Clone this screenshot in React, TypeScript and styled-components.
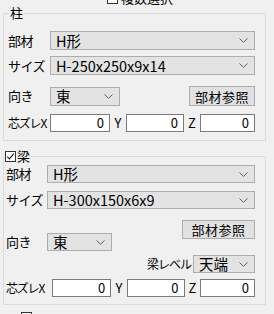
import { FC } from 'react';
import styled, { createGlobalStyle } from 'styled-components';

const GlobalStyle = createGlobalStyle`
  html, body {
    margin: 0;
    padding: 0;
    background: #f0f0f0;
  }
  body {
    font-family: "Noto Sans CJK JP", "Liberation Sans", sans-serif;
    font-size: 13px;
    color: #000;
  }
`;

const Panel = styled.div`
  width: 274px;
  height: 314px;
  overflow: hidden;
  box-sizing: border-box;
  padding: 0 8px 0 3px;
  background: #f0f0f0;
  display: flex;
  flex-direction: column;
`;

const CutRow = styled.div<{ $height: number; $shift: number; $indent: number }>`
  height: ${({ $height }) => $height}px;
  overflow: hidden;
  flex: none;
  > div {
    margin-top: ${({ $shift }) => $shift}px;
    margin-left: ${({ $indent }) => $indent}px;
    display: flex;
    align-items: center;
    gap: 3px;
    line-height: 14px;
  }
`;

const Group = styled.fieldset<{ $top: number; $pt: number; $pb: number; $pl: number }>`
  margin: ${({ $top }) => $top}px 0 0 0;
  padding: ${({ $pt }) => $pt}px 10px ${({ $pb }) => $pb}px ${({ $pl }) => $pl}px;
  border: 1px solid #dcdcdc;
  border-radius: 0;
  min-width: 0;
  flex: none;
  box-sizing: border-box;
`;

const Legend = styled.legend<{ $ml: number }>`
  padding: 0 1px;
  margin-left: ${({ $ml }) => $ml}px;
  line-height: 14px;
  font-size: 13px;
  display: flex;
  align-items: center;
  gap: 1px;
`;

const Box = styled.span`
  width: 11px;
  height: 11px;
  box-sizing: border-box;
  border: 1px solid #333;
  background: #fff;
  display: inline-flex;
  align-items: center;
  justify-content: center;
`;

const Row = styled.div<{ $mt: number; $label: number }>`
  display: grid;
  grid-template-columns: ${({ $label }) => $label}px 1fr;
  align-items: center;
  margin-top: ${({ $mt }) => $mt}px;
`;

const Label = styled.span<{ $small?: boolean }>`
  white-space: nowrap;
  line-height: 14px;
  font-size: ${({ $small }) => ($small ? '12px' : '13px')};
  letter-spacing: ${({ $small }) => ($small ? '-1px' : '-0.5px')};
`;

const Combo = styled.div<{ $w?: number; $h: number }>`
  width: ${({ $w }) => ($w ? `${$w}px` : 'auto')};
  height: ${({ $h }) => $h}px;
  box-sizing: border-box;
  border: 1px solid #adadad;
  background: #e3e3e3;
  display: flex;
  align-items: center;
  justify-content: space-between;
  padding: 0 6px 0 5px;
  font-size: 14.5px;
  line-height: 14px;
  svg {
    flex: none;
  }
`;

const Button = styled.div<{ $w: number; $h: number }>`
  width: ${({ $w }) => $w}px;
  height: ${({ $h }) => $h}px;
  box-sizing: border-box;
  border: 1px solid #adadad;
  background: #e1e1e1;
  display: flex;
  align-items: center;
  justify-content: center;
  font-size: 13px;
  letter-spacing: 0.5px;
`;

const OffsetRow = styled.div<{ $mt: number }>`
  display: flex;
  align-items: center;
  margin-top: ${({ $mt }) => $mt}px;
`;

const OffsetLabel = styled.span<{ $w: number }>`
  width: ${({ $w }) => $w}px;
  white-space: nowrap;
  font-size: 12px;
  letter-spacing: -1.2px;
`;

const Axis = styled.span<{ $w: number }>`
  width: ${({ $w }) => $w}px;
  text-align: center;
  font-size: 13px;
`;

const NumField = styled.div<{ $w: number }>`
  width: ${({ $w }) => $w}px;
  height: 18px;
  box-sizing: border-box;
  border: 1px solid #7a7a7a;
  background: #fff;
  display: flex;
  align-items: center;
  justify-content: flex-end;
  padding-right: 5px;
  font-size: 13px;
`;

const DirArea = styled.div`
  display: grid;
  grid-template-columns: auto 1fr;
  margin-top: 11px;
`;

const DirLeft = styled.div`
  display: grid;
  grid-template-columns: 41px auto;
  align-items: center;
  align-self: start;
  margin-top: 13px;
`;

const DirRight = styled.div`
  display: flex;
  flex-direction: column;
  align-items: flex-end;
  gap: 16px;
`;

const LevelRow = styled.div`
  display: flex;
  align-items: center;
  gap: 2px;
`;

const ButtonRow = styled.div<{ $mt: number }>`
  display: flex;
  justify-content: space-between;
  align-items: center;
  margin-top: ${({ $mt }) => $mt}px;
`;

const InlineCombo = styled.div<{ $label: number }>`
  display: grid;
  grid-template-columns: ${({ $label }) => $label}px auto;
  align-items: center;
`;

const Chevron: FC = () => (
  <svg width="9" height="5" viewBox="0 0 9 5">
    <polyline points="0.5,0.5 4.5,4.3 8.5,0.5" fill="none" stroke="#606060" strokeWidth="1" />
  </svg>
);

const Check: FC = () => (
  <svg width="9" height="9" viewBox="0 0 9 9">
    <polyline points="1.2,4.6 3.4,6.8 7.8,1.6" fill="none" stroke="#222" strokeWidth="1.2" />
  </svg>
);

const Offsets: FC<{ mt: number; label: number }> = ({ mt, label }) => (
  <OffsetRow $mt={mt}>
    <OffsetLabel $w={label}>芯ズレX</OffsetLabel>
    <NumField $w={60}>0</NumField>
    <Axis $w={16}>Y</Axis>
    <NumField $w={58}>0</NumField>
    <Axis $w={16}>Z</Axis>
    <NumField $w={55}>0</NumField>
  </OffsetRow>
);

export default function App() {
  return (
    <>
      <GlobalStyle />
      <Panel>
        <CutRow $height={5} $shift={-9} $indent={104}>
          <div>
            <Box />
            <span>複数選択</span>
          </div>
        </CutRow>
        <Group $top={1} $pt={11} $pb={8} $pl={4}>
          <Legend $ml={1}>柱</Legend>
          <Row $mt={0} $label={42}>
            <Label>部材</Label>
            <Combo $h={19}>
              H形
              <Chevron />
            </Combo>
          </Row>
          <Row $mt={6} $label={42}>
            <Label>サイズ</Label>
            <Combo $h={19}>
              H-250x250x9x14
              <Chevron />
            </Combo>
          </Row>
          <ButtonRow $mt={11}>
            <InlineCombo $label={42}>
              <Label>向き</Label>
              <Combo $w={70} $h={19}>
                東
                <Chevron />
              </Combo>
            </InlineCombo>
            <Button $w={66} $h={20}>部材参照</Button>
          </ButtonRow>
          <Offsets mt={7} label={42} />
        </Group>
        <Group $top={8} $pt={2} $pb={7} $pl={2}>
          <Legend $ml={-2}>
            <Box>
              <Check />
            </Box>
            梁
          </Legend>
          <Row $mt={0} $label={41}>
            <Label>部材</Label>
            <Combo $h={18}>
              H形
              <Chevron />
            </Combo>
          </Row>
          <Row $mt={8} $label={41}>
            <Label>サイズ</Label>
            <Combo $h={18}>
              H-300x150x6x9
              <Chevron />
            </Combo>
          </Row>
          <DirArea>
            <DirLeft>
              <Label>向き</Label>
              <Combo $w={65} $h={18}>
                東
                <Chevron />
              </Combo>
            </DirLeft>
            <DirRight>
              <Button $w={73} $h={19}>部材参照</Button>
              <LevelRow>
                <Label $small>梁レベル</Label>
                <Combo $w={62} $h={18}>
                  天端
                  <Chevron />
                </Combo>
              </LevelRow>
            </DirRight>
          </DirArea>
          <Offsets mt={5} label={46} />
        </Group>
        <CutRow $height={12} $shift={7} $indent={18}>
          <div>
            <Box />
          </div>
        </CutRow>
      </Panel>
    </>
  );
}
